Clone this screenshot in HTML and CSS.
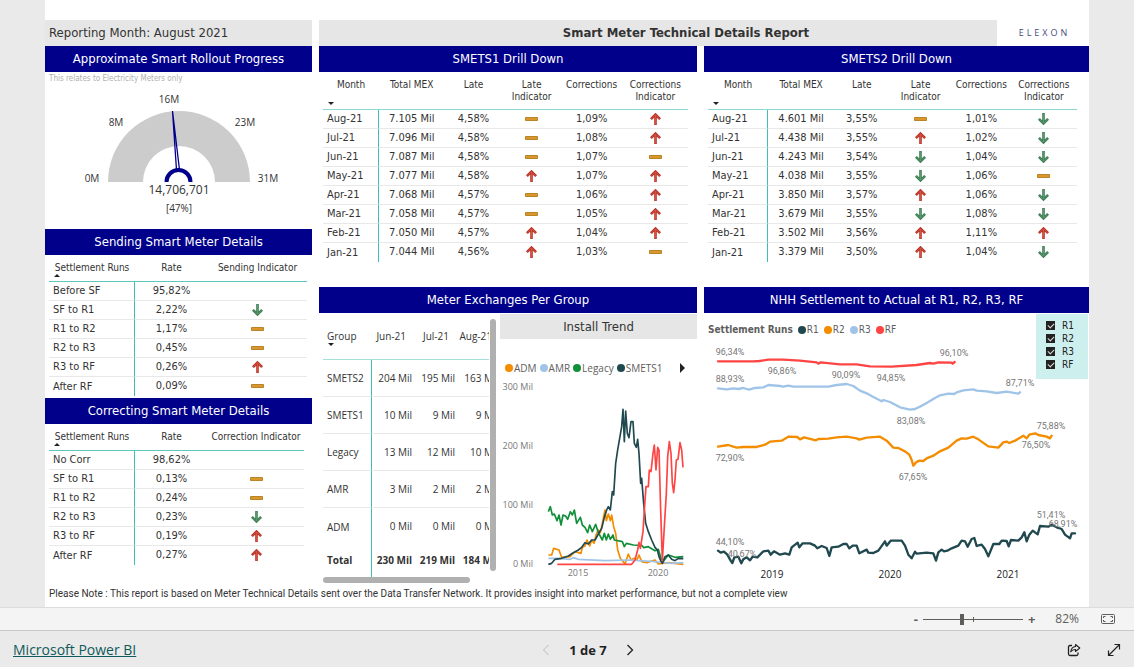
FILE: index.html
```html
<!DOCTYPE html>
<html lang="en">
<head>
<meta charset="utf-8">
<title>Smart Meter Technical Details Report</title>
<link rel="stylesheet" href="styles.css">
</head>
<body>
<svg class="defs" aria-hidden="true">
  <symbol id="up" viewBox="0 0 12 12"><path d="M6 1.6V12M1.4 6.200L6 1.6L10.6 6.200" fill="none" stroke="#b5352a" stroke-width="2.600"/><path d="M6 2V11.400M2 5.8L6 1.8L10 5.8" fill="none" stroke="#d9503f" stroke-width="1"/></symbol>
  <symbol id="down" viewBox="0 0 12 12"><path d="M6 0V10.4M1.4 5.800L6 10.4L10.6 5.800" fill="none" stroke="#3f7d55" stroke-width="2.600"/><path d="M6 .6V10M2 6.2L6 10.2L10 6.2" fill="none" stroke="#57996d" stroke-width="1"/></symbol>
  <symbol id="flat" viewBox="0 0 13 12"><path d="M.5 4.5H12.5V7.5H.5Z" fill="#d9972c" stroke="#b98328"/></symbol>
</svg>
<main class="stage">
  <div class="report">
    <header class="titles">
      <div class="month">Reporting Month: August 2021</div>
      <div class="title-row">
        <h1 class="title">Smart Meter Technical Details Report</h1>
        <div class="logo">ELEXON</div>
      </div>
    </header>
    <div class="columns">
      <section class="column">
        <h2 class="heading">Approximate Smart Rollout Progress</h2>
        <div class="gauge">
          <p class="hint">This relates to Electricity Meters only</p>
          <svg class="gauge-chart" viewBox="0 0 267 134" role="img" aria-label="14,706,701 of 31M meters">
            <path d="M63 96A71 71 0 0 1 205 96H170A36 36 0 0 0 98 96Z" fill="#ccc"/>
            <path d="M127.500 25L131.500 84M127.500 25L134.500 84" stroke="#00008b" stroke-width="1.300" fill="none"/>
            <path d="M121.500 96A12 12 0 0 1 145.500 96" stroke="#00008b" stroke-width="4" fill="none"/>
            <g class="gauge-label" text-anchor="middle">
              <text x="124" y="17">16M</text><text x="71" y="40">8M</text><text x="200" y="40">23M</text>
              <text x="47" y="96">0M</text><text x="223" y="96">31M</text><text x="134" y="126">[47%]</text>
              <text class="gauge-value" x="134" y="108">14,706,701</text>
            </g>
          </svg>
        </div>
        <h2 class="heading">Sending Smart Meter Details</h2>
        <div class="panel sending">
          <table class="grid runs">
            <colgroup><col class="r1"><col class="r2"><col class="r3"></colgroup>
            <thead><tr><th>Settlement Runs<i class="sort asc"></i></th><th>Rate</th><th>Sending Indicator</th></tr></thead>
            <tbody>
              <tr><td>Before SF</td><td>95,82%</td><td></td></tr>
              <tr><td>SF to R1</td><td>2,22%</td><td><svg class="ind"><use href="#down"/></svg></td></tr>
              <tr><td>R1 to R2</td><td>1,17%</td><td><svg class="ind"><use href="#flat"/></svg></td></tr>
              <tr><td>R2 to R3</td><td>0,45%</td><td><svg class="ind"><use href="#flat"/></svg></td></tr>
              <tr><td>R3 to RF</td><td>0,26%</td><td><svg class="ind"><use href="#up"/></svg></td></tr>
              <tr><td>After RF</td><td>0,09%</td><td><svg class="ind"><use href="#flat"/></svg></td></tr>
            </tbody>
          </table>
        </div>
        <h2 class="heading">Correcting Smart Meter Details</h2>
        <div class="panel correcting">
          <table class="grid runs">
            <colgroup><col class="r1"><col class="r2"><col class="r3"></colgroup>
            <thead><tr><th>Settlement Runs<i class="sort asc"></i></th><th>Rate</th><th>Correction Indicator</th></tr></thead>
            <tbody>
              <tr><td>No Corr</td><td>98,62%</td><td></td></tr>
              <tr><td>SF to R1</td><td>0,13%</td><td><svg class="ind"><use href="#flat"/></svg></td></tr>
              <tr><td>R1 to R2</td><td>0,24%</td><td><svg class="ind"><use href="#flat"/></svg></td></tr>
              <tr><td>R2 to R3</td><td>0,23%</td><td><svg class="ind"><use href="#down"/></svg></td></tr>
              <tr><td>R3 to RF</td><td>0,19%</td><td><svg class="ind"><use href="#up"/></svg></td></tr>
              <tr><td>After RF</td><td>0,27%</td><td><svg class="ind"><use href="#up"/></svg></td></tr>
            </tbody>
          </table>
        </div>
      </section>

      <section class="column">
        <h2 class="heading">SMETS1 Drill Down</h2>
        <div class="panel drill">
          <table class="grid months">
            <colgroup><col class="m1"><col class="m2"><col class="m3"><col class="m4"><col class="m5"><col class="m6"></colgroup>
            <thead><tr><th>Month<i class="sort desc"></i></th><th>Total MEX</th><th>Late</th><th>Late<br>Indicator</th><th>Corrections</th><th>Corrections<br>Indicator</th></tr></thead>
            <tbody>
              <tr><td>Aug-21</td><td>7.105 Mil</td><td>4,58%</td><td><svg class="ind"><use href="#flat"/></svg></td><td>1,09%</td><td><svg class="ind"><use href="#up"/></svg></td></tr>
              <tr><td>Jul-21</td><td>7.096 Mil</td><td>4,58%</td><td><svg class="ind"><use href="#flat"/></svg></td><td>1,08%</td><td><svg class="ind"><use href="#up"/></svg></td></tr>
              <tr><td>Jun-21</td><td>7.087 Mil</td><td>4,58%</td><td><svg class="ind"><use href="#flat"/></svg></td><td>1,07%</td><td><svg class="ind"><use href="#flat"/></svg></td></tr>
              <tr><td>May-21</td><td>7.077 Mil</td><td>4,58%</td><td><svg class="ind"><use href="#up"/></svg></td><td>1,07%</td><td><svg class="ind"><use href="#up"/></svg></td></tr>
              <tr><td>Apr-21</td><td>7.068 Mil</td><td>4,57%</td><td><svg class="ind"><use href="#flat"/></svg></td><td>1,06%</td><td><svg class="ind"><use href="#up"/></svg></td></tr>
              <tr><td>Mar-21</td><td>7.058 Mil</td><td>4,57%</td><td><svg class="ind"><use href="#flat"/></svg></td><td>1,05%</td><td><svg class="ind"><use href="#up"/></svg></td></tr>
              <tr><td>Feb-21</td><td>7.050 Mil</td><td>4,57%</td><td><svg class="ind"><use href="#up"/></svg></td><td>1,04%</td><td><svg class="ind"><use href="#up"/></svg></td></tr>
              <tr><td>Jan-21</td><td>7.044 Mil</td><td>4,56%</td><td><svg class="ind"><use href="#up"/></svg></td><td>1,03%</td><td><svg class="ind"><use href="#flat"/></svg></td></tr>
            </tbody>
          </table>
        </div>
        <h2 class="heading">Meter Exchanges Per Group</h2>
        <div class="exchanges">
          <div class="groups">
            <div class="groups-view">
              <table class="grid group-table">
                <colgroup><col class="g1"><col class="g2"><col class="g2"><col class="g2"></colgroup>
                <thead><tr><th>Group<i class="sort desc"></i></th><th>Jun-21</th><th>Jul-21</th><th>Aug-21</th></tr></thead>
                <tbody>
                  <tr><td>SMETS2</td><td>204 Mil</td><td>195 Mil</td><td>163 Mil</td></tr>
                  <tr><td>SMETS1</td><td>10 Mil</td><td>9 Mil</td><td>9 Mil</td></tr>
                  <tr><td>Legacy</td><td>13 Mil</td><td>12 Mil</td><td>10 Mil</td></tr>
                  <tr><td>AMR</td><td>3 Mil</td><td>2 Mil</td><td>2 Mil</td></tr>
                  <tr><td>ADM</td><td>0 Mil</td><td>0 Mil</td><td>0 Mil</td></tr>
                </tbody>
                <tfoot><tr><td>Total</td><td>230 Mil</td><td>219 Mil</td><td>184 Mil</td></tr></tfoot>
              </table>
            </div>
            <div class="bar-v"></div>
            <div class="bar-h"></div>
          </div>
          <div class="trend">
            <h3 class="subheading">Install Trend</h3>
            <div class="legend trend-legend">
              <span class="key"><i class="dot orange"></i>ADM</span>
              <span class="key"><i class="dot blue"></i>AMR</span>
              <span class="key"><i class="dot green"></i>Legacy</span>
              <span class="key"><i class="dot teal"></i>SMETS1</span>
              <button class="more" aria-label="More legend entries"></button>
            </div>
            <svg class="chart" viewBox="0 0 197 207" role="img" aria-label="Install trend by meter group">
              <g class="axis" text-anchor="end">
                <text x="33" y="13">300 Mil</text><text x="33" y="72">200 Mil</text><text x="33" y="131">100 Mil</text><text x="33" y="190">0 Mil</text>
              </g>
              <g class="axis" text-anchor="middle"><text x="78" y="199">2015</text><text x="158" y="199">2020</text></g>
              <g class="series" transform="translate(-5 -67) scale(.33333)">
                <polyline class="s-orange" points="160,735 170,735 176,715 192,720 200,742 225,740 240,725 258,730 262,712 270,708 276,690 284,708 290,690 297,700 304,672 310,660 316,668 322,640 330,600 334,632 340,612 346,632 350,615 356,650 362,670 368,720 376,745 390,762 400,732 408,750 418,745 426,750 432,735 440,755 455,758 480,750 490,762 520,758 565,763"/>
                <polyline class="s-blue" points="160,745 190,745 225,748 235,743 250,748 330,752 400,750 470,754 490,756 530,760 565,758"/>
                <polyline class="s-green" points="160,605 166,590 172,615 178,612 186,632 192,615 198,645 204,615 212,618 218,628 226,605 232,615 238,600 245,640 256,622 262,645 270,652 278,668 284,645 292,665 302,643 310,668 322,690 328,670 334,690 340,672 346,688 354,675 358,690 382,695 388,710 394,700 415,705 440,706 446,713 460,710 480,722 490,718 498,745 504,755 520,735 540,742 565,740"/>
                <polyline class="s-teal" points="160,763 170,760 180,748 200,745 220,738 235,728 250,720 260,712 270,698 280,702 290,690 300,690 310,672 320,655 328,622 335,600 340,590 346,600 352,545 356,555 362,460 368,420 374,385 380,350 384,298 388,395 392,303 397,370 402,383 408,335 414,335 418,400 424,412 428,388 432,430 437,520 440,505 446,580 452,640 460,665 470,690 480,712 487,720 492,740 497,752 502,760 510,740 520,735 530,748 540,752 550,745 565,746"/>
                <polyline class="s-red" points="187,763 410,763 420,750 428,720 432,697 436,715 444,665 448,600 453,530 460,530 463,480 468,485 474,430 478,405 483,480 488,412 492,420 497,600 502,752 508,650 514,550 518,440 523,395 528,430 532,520 536,548 540,510 544,450 549,448 555,398 560,420 564,472"/>
              </g>
            </svg>
          </div>
        </div>
      </section>

      <section class="column">
        <h2 class="heading">SMETS2 Drill Down</h2>
        <div class="panel drill wide">
          <table class="grid months">
            <colgroup><col class="n1"><col class="n2"><col class="n3"><col class="n4"><col class="n5"><col class="n6"></colgroup>
            <thead><tr><th>Month<i class="sort desc"></i></th><th>Total MEX</th><th>Late</th><th>Late<br>Indicator</th><th>Corrections</th><th>Corrections<br>Indicator</th></tr></thead>
            <tbody>
              <tr><td>Aug-21</td><td>4.601 Mil</td><td>3,55%</td><td><svg class="ind"><use href="#flat"/></svg></td><td>1,01%</td><td><svg class="ind"><use href="#down"/></svg></td></tr>
              <tr><td>Jul-21</td><td>4.438 Mil</td><td>3,55%</td><td><svg class="ind"><use href="#up"/></svg></td><td>1,02%</td><td><svg class="ind"><use href="#down"/></svg></td></tr>
              <tr><td>Jun-21</td><td>4.243 Mil</td><td>3,54%</td><td><svg class="ind"><use href="#down"/></svg></td><td>1,04%</td><td><svg class="ind"><use href="#down"/></svg></td></tr>
              <tr><td>May-21</td><td>4.038 Mil</td><td>3,55%</td><td><svg class="ind"><use href="#down"/></svg></td><td>1,06%</td><td><svg class="ind"><use href="#flat"/></svg></td></tr>
              <tr><td>Apr-21</td><td>3.850 Mil</td><td>3,57%</td><td><svg class="ind"><use href="#up"/></svg></td><td>1,06%</td><td><svg class="ind"><use href="#down"/></svg></td></tr>
              <tr><td>Mar-21</td><td>3.679 Mil</td><td>3,55%</td><td><svg class="ind"><use href="#down"/></svg></td><td>1,08%</td><td><svg class="ind"><use href="#down"/></svg></td></tr>
              <tr><td>Feb-21</td><td>3.502 Mil</td><td>3,56%</td><td><svg class="ind"><use href="#up"/></svg></td><td>1,11%</td><td><svg class="ind"><use href="#up"/></svg></td></tr>
              <tr><td>Jan-21</td><td>3.379 Mil</td><td>3,50%</td><td><svg class="ind"><use href="#up"/></svg></td><td>1,04%</td><td><svg class="ind"><use href="#down"/></svg></td></tr>
            </tbody>
          </table>
        </div>
        <h2 class="heading">NHH Settlement to Actual at R1, R2, R3, RF</h2>
        <div class="settlement">
          <div class="legend run-legend">
            <b>Settlement Runs</b>
            <span class="key"><i class="dot teal"></i>R1</span>
            <span class="key"><i class="dot orange"></i>R2</span>
            <span class="key"><i class="dot blue"></i>R3</span>
            <span class="key"><i class="dot red"></i>RF</span>
          </div>
          <svg class="chart" viewBox="0 0 385 244" role="img" aria-label="Settlement percentage by run">
            <g class="series thick" transform="translate(-4 -56) scale(.33333)">
              <polyline class="s-red" points="54,232 160,232 178,231 205,227 250,227 300,230 350,235 355,239 362,235 420,241 470,241 510,247 575,248 650,243 690,237 700,239 715,235 755,236 758,239 764,234"/>
              <polyline class="s-blue" points="54,313 80,316 100,313 115,315 130,312 147,317 165,312 190,310 205,303 240,306 250,308 265,305 280,308 385,308 410,303 440,300 460,306 480,320 500,328 520,339 545,352 550,348 570,354 600,370 630,377 645,375 660,368 685,354 705,342 720,334 745,329 763,330 770,325 790,319 820,316 830,320 860,322 890,327 920,323 955,329 960,325"/>
              <polyline class="s-orange" points="54,488 85,483 100,488 110,491 130,489 170,489 195,482 210,473 245,470 265,458 292,459 300,466 312,460 348,469 355,465 385,464 410,460 440,458 470,463 478,467 500,461 540,458 560,470 580,491 595,492 615,502 628,512 634,525 640,545 648,535 658,530 670,531 680,523 700,515 720,502 745,491 770,470 785,463 800,464 820,458 835,466 865,487 895,491 910,475 920,473 928,477 945,470 970,455 980,463 988,452 1006,448 1015,453 1040,458 1050,463 1055,455"/>
              <polyline class="s-teal" points="54,800 62,806 72,803 82,812 92,830 97,837 103,820 115,818 124,838 130,826 140,820 150,829 158,818 172,820 190,802 205,800 212,812 222,802 240,812 255,808 268,812 275,790 293,776 298,790 308,778 330,778 345,785 352,793 365,786 380,792 388,816 395,790 415,788 430,780 440,780 448,793 458,785 470,785 478,808 500,797 505,806 520,807 535,800 555,772 560,785 572,770 605,770 615,785 625,812 635,823 645,803 650,809 680,806 700,808 708,830 715,805 725,797 732,802 742,800 755,793 775,785 785,770 795,772 803,788 815,765 823,762 830,786 845,782 855,795 865,817 880,780 898,780 905,770 920,771 926,787 933,768 955,770 965,760 973,745 980,772 988,752 998,740 1013,751 1020,726 1045,728 1055,722 1070,730 1085,735 1095,752 1110,763 1115,748 1125,748"/>
            </g>
            <g class="mark" text-anchor="middle">
              <text x="26" y="15">96,34%</text><text x="78" y="34">96,86%</text><text x="26" y="42">88,93%</text><text x="142" y="38">90,09%</text>
              <text x="187" y="41">94,85%</text><text x="250" y="16">96,10%</text><text x="316" y="46">87,71%</text><text x="207" y="84">83,08%</text>
              <text x="26" y="121">72,90%</text><text x="347" y="89">75,88%</text><text x="332" y="108">76,50%</text><text x="209" y="140">67,65%</text>
              <text x="26" y="205">44,10%</text><text x="38" y="217">40,67%</text><text x="347" y="178">51,41%</text><text x="359" y="187">68,91%</text>
            </g>
            <g class="year" text-anchor="middle"><text x="68" y="238">2019</text><text x="186" y="238">2020</text><text x="304" y="238">2021</text></g>
          </svg>
          <div class="slicer">
            <label class="choice"><input class="tick" type="checkbox" checked>R1</label>
            <label class="choice"><input class="tick" type="checkbox" checked>R2</label>
            <label class="choice"><input class="tick" type="checkbox" checked>R3</label>
            <label class="choice"><input class="tick" type="checkbox" checked>RF</label>
          </div>
        </div>
      </section>
    </div>
    <p class="note">Please Note : This report is based on Meter Technical Details sent over the Data Transfer Network. It provides insight into market performance, but not a complete view</p>
  </div>
</main>
<div class="zoombar">
  <button class="flat-btn" aria-label="Zoom out">-</button>
  <input class="zoom" type="range" min="0" max="100" value="39" aria-label="Zoom">
  <button class="flat-btn" aria-label="Zoom in">+</button>
  <span class="percent">82%</span>
  <button class="flat-btn" aria-label="Fit to page"><svg class="fit" viewBox="0 0 14 10"><rect x=".5" y=".5" width="13" height="9" rx="1" fill="none" stroke="#605e5c"/><path d="M4.500 2.500H2.500V4M2.500 6V7.500H4.500M9.500 2.500H11.500V4M11.500 6V7.500H9.500" fill="none" stroke="#605e5c"/></svg></button>
</div>
<footer class="footer">
  <a class="brand" href="#">Microsoft Power BI</a>
  <nav class="pager" aria-label="Pages">
    <button class="flat-btn" aria-label="Previous page"><svg class="chev" viewBox="0 0 8 12"><path d="M6.500 1L1.500 6L6.500 11" fill="none" stroke="#bbb"/></svg></button>
    <span class="page">1 de 7</span>
    <button class="flat-btn" aria-label="Next page"><svg class="chev" viewBox="0 0 8 12"><path d="M1.500 1L6.500 6L1.500 11" fill="none" stroke="#222" stroke-width="1.300"/></svg></button>
  </nav>
  <div class="actions">
    <button class="flat-btn" aria-label="Share"><svg class="act" viewBox="0 0 14 14"><path d="M5 2.500H3Q1.500 2.500 1.500 4V11Q1.500 12.500 3 12.500H9.500Q11 12.500 11 11V9.500" fill="none" stroke="#222" stroke-width="1.300"/><path d="M8.500 1.500L12.800 5L8.500 8.500V6.500Q5.500 6.300 3.800 8.800Q4.200 4 8.500 3.500Z" fill="none" stroke="#222" stroke-width="1.100" stroke-linejoin="round"/></svg></button>
    <button class="flat-btn" aria-label="Full screen"><svg class="act" viewBox="0 0 14 14"><path d="M1.500 12.500L12.500 1.500M7.500 1.500H12.500V6.500M1.500 7.500V12.500H6.500" fill="none" stroke="#222" stroke-width="1.200"/></svg></button>
  </div>
</footer>
</body>
</html>
```
FILE: styles.css
```css
* { box-sizing: border-box; }
body {
  margin: 0;
  min-height: 100vh;
  display: flex;
  flex-direction: column;
  background: #eaeaea;
  color: #333;
  font: 11px/14px "DejaVu Sans Condensed", "Noto Sans", sans-serif;
}
.defs { position: absolute; width: 0; height: 0; }
h1, h2, h3, p { margin: 0; font-weight: normal; }
button { font: inherit; color: inherit; }

.stage { flex: 1; display: flex; padding: 0 45px; }
.report { flex: 1; display: flex; flex-direction: column; padding-top: 20px; background: #fff; }
.titles { display: grid; grid-template-columns: 267fr 770fr; gap: 7px; height: 26px; line-height: 26px; }
.month { padding-left: 4px; background: #e6e6e6; font-size: 13px; }
.title-row { display: flex; }
.title { flex: 1; padding-left: 56px; background: #e6e6e6; text-align: center; font-size: 13px; font-weight: bold; }
.logo { width: 92px; padding-left: 3px; text-align: center; font: 9px/26px "Open Sans", sans-serif; letter-spacing: 3px; color: #4a4a80; }

.columns { display: grid; grid-template-columns: 267fr 378fr 385fr; gap: 7px; }
.column { display: flex; flex-direction: column; min-width: 0; }
.heading { height: 26px; line-height: 26px; background: #00008b; color: #fff; font-size: 13px; text-align: center; }

.gauge { height: 157px; }
.hint { padding: 0 4px; font-size: 8px; color: #b0b0b0; }
.gauge-chart { display: block; width: 100%; }
.gauge-label { font: 10px "Open Sans", sans-serif; fill: #333; }
.gauge-value { font-size: 12px; }

.panel { padding: 0 4px; }
.sending { height: 143px; padding-right: 5px; }
.correcting { height: 160px; padding-right: 8px; }
.drill { height: 215px; padding-right: 9px; }
.wide { padding-right: 12px; }

.grid { width: 100%; table-layout: fixed; border-collapse: separate; border-spacing: 0; }
.grid th { position: relative; padding: 0; font-size: 10px; line-height: 12px; font-weight: normal; vertical-align: top; border-bottom: 1px solid #5cc8c0; }
.months th { border-bottom-color: #8adad2; }
.grid td { height: 19px; padding: 0; line-height: 18px; text-align: center; border-bottom: 1px solid #e8e8e8; }
.grid tbody tr:last-child td { border-bottom-color: transparent; }
.grid td:first-child { padding-left: 4px; text-align: left; border-right: 1px solid #3cbfb5; }
.grid tbody tr:last-child td:first-child { border-bottom: 0; }
.runs th { height: 27px; padding-top: 7px; }
.months th { height: 38px; padding-top: 7px; }
.ind { display: block; width: 13px; height: 12px; margin: 0 auto; }
.sort { position: absolute; left: 5px; bottom: 4px; border: 3px solid transparent; }
.asc { border-top: 0; border-bottom-color: #222; }
.desc { border-bottom: 0; border-top-color: #222; }
.r1 { width: 86px; } .r2 { width: 73px; } .r3 { width: auto; }
.m1 { width: 56px; } .m2 { width: 18%; } .m3 { width: 16%; } .m4 { width: 16%; } .m5 { width: 17%; } .m6 { width: 18%; }
.n1 { width: 60px; } .n2 { width: 18%; } .n3 { width: 15%; } .n4 { width: 17%; } .n5 { width: 16%; } .n6 { width: 18%; }

.exchanges { display: flex; height: 271px; }
.groups { width: 177px; display: grid; grid-template-columns: minmax(0, 1fr) 6px; grid-template-rows: 1fr 6px; padding: 0 0 1px 4px; margin-right: 4px; }
.groups-view { overflow: hidden; height: 264px; margin-right: 1px; }
.group-table { width: 178px; font: 10px/14px "Open Sans", sans-serif; }
.group-table th { height: 47px; padding: 16px 9px 0 0; line-height: 14px; text-align: right; border-bottom-color: #a5e0db; }
.group-table th:first-child { text-align: left; padding-left: 4px; }
.group-table td { height: 37px; padding-right: 3px; text-align: right; }
.group-table tfoot td { height: 32px; padding-bottom: 2px; border-bottom: 0; font-weight: bold; }
.group-table .sort { bottom: 13px; }
.g1 { width: 49px; } .g2 { width: 43px; }
.bar-v { margin: 6px 0; border-radius: 3px; background: #b0b0b0; }
.bar-h { width: 147px; height: 6px; border-radius: 3px; background: #b0b0b0; }

.trend { flex: 1; min-width: 0; padding-top: 1px; }
.subheading { height: 25px; line-height: 25px; background: #e6e6e6; text-align: center; font-size: 13px; }
.legend { display: flex; align-items: center; font-size: 10px; color: #605e5c; }
.key { display: flex; align-items: center; gap: 1px; }
.dot { width: 8px; height: 8px; border-radius: 50%; }
.trend-legend { height: 38px; padding: 20px 12px 0 5px; gap: 3px; font-family: "Open Sans", sans-serif; }
.run-legend { height: 27px; padding: 7px 4px 0; gap: 5px; }
.more { margin-left: auto; padding: 0; width: 0; height: 0; background: none; border: 5px solid transparent; border-left-color: #222; border-right: 0; }
.orange { background: #f48c00; } .blue { background: #a0c4e8; } .green { background: #0f8f38; } .teal { background: #20484f; } .red { background: #ff4444; }

.chart { display: block; width: 100%; }
.axis { font: 9px "Open Sans", sans-serif; fill: #777; }
.mark { font: 9px Roboto, sans-serif; fill: #777; }
.year { font: 10px "Open Sans", sans-serif; fill: #222; }
.series polyline { fill: none; stroke-width: 5; stroke-linejoin: round; }
.thick polyline { stroke-width: 7; stroke-linecap: round; }
.series .s-orange { stroke: #f48c00; } .series .s-blue { stroke: #a0c4e8; } .series .s-green { stroke: #0f8f38; }
.series .s-teal { stroke: #20484f; } .series .s-red { stroke: #ff4444; }

.settlement { position: relative; }
.slicer { position: absolute; top: 1px; right: 1px; width: 52px; height: 65px; padding: 5px 10px; background: #cdf0ee; }
.choice { display: flex; align-items: center; gap: 7px; height: 13px; font-size: 10px; color: #222; }
.tick { appearance: none; width: 9px; height: 9px; margin: 0; background: #222; display: grid; place-items: center; }
.tick:checked::after { content: ""; width: 5px; height: 3px; margin-bottom: 1px; border: solid #ddd; border-width: 0 0 1px 1px; rotate: -45deg; }

.note { padding: 3px 4px 0; font: 10px/14px Roboto, sans-serif; }

.zoombar { height: 24px; display: flex; align-items: center; justify-content: flex-end; gap: 5px; padding-right: 19px; background: #f4f4f4; border-top: 1px solid #dcdcdc; border-bottom: 1px solid #c8c8c8; color: #605e5c; font-family: "Open Sans", sans-serif; }
.flat-btn { display: flex; padding: 0; border: 0; background: none; }
.zoombar .flat-btn { font-size: 13px; font-weight: bold; }
.zoom { appearance: none; width: 100px; height: 12px; margin: 0; background: linear-gradient(#605e5c, #605e5c) 50px 50% / 1px 5px no-repeat, linear-gradient(#605e5c, #605e5c) 0 50% / 100% 1px no-repeat; }
.zoom::-webkit-slider-thumb { appearance: none; width: 4px; height: 11px; background: #605e5c; }
.percent { padding: 0 17px 0 15px; font-size: 12px; }
.fit { width: 14px; height: 10px; }
.footer { height: 36px; display: grid; grid-template-columns: 1fr auto 1fr; align-items: center; padding: 2px 13px 0; font-family: "Open Sans", sans-serif; }
.brand { font-size: 14px; line-height: 20px; color: #0f5a5a; justify-self: start; }
.pager { display: flex; align-items: center; gap: 19px; margin-left: 42px; }
.page { font-size: 13px; font-weight: bold; color: #222; }
.chev { width: 8px; height: 12px; }
.actions { display: flex; gap: 26px; justify-self: end; }
.act { width: 14px; height: 14px; }
```
